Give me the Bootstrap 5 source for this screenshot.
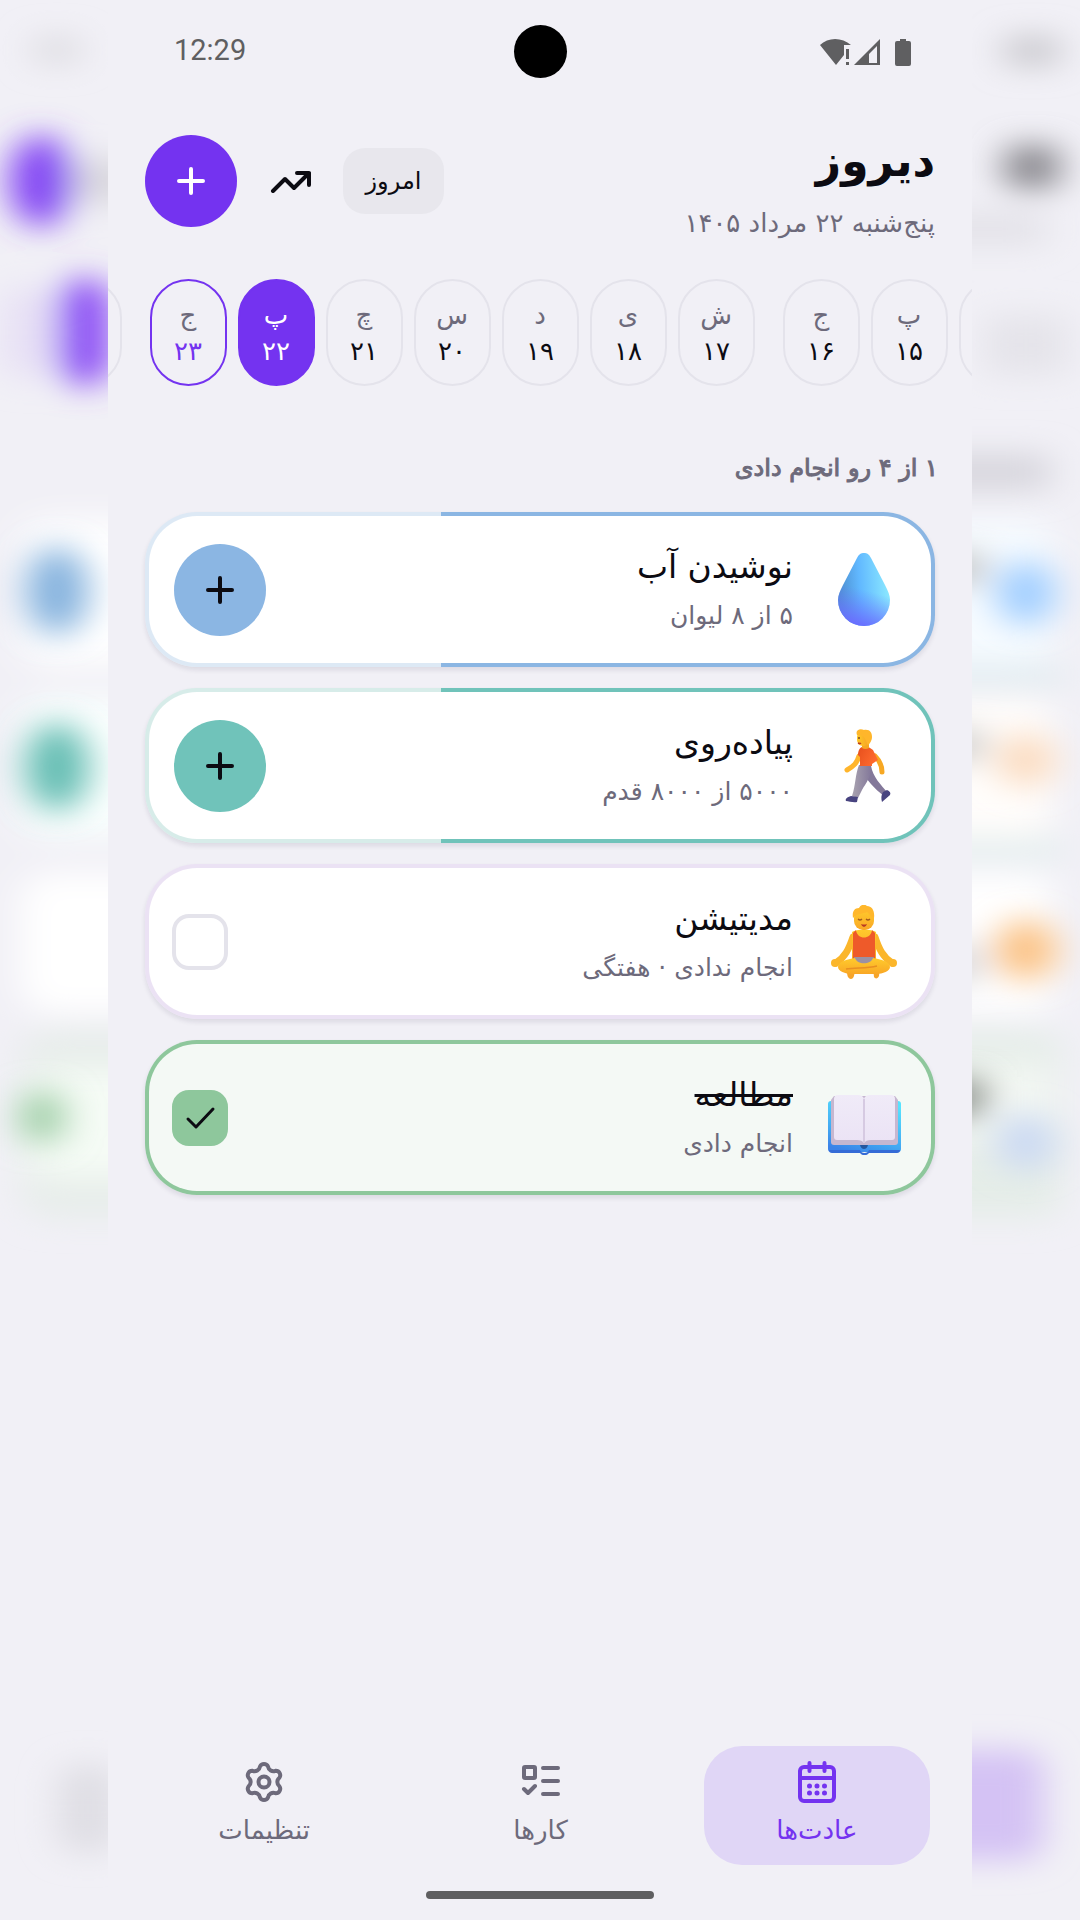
<!DOCTYPE html>
<html lang="fa" dir="rtl">
<head>
<meta charset="utf-8">
<meta name="viewport" content="width=device-width, initial-scale=1">
<title>عادت‌ها</title>
<link href="https://cdn.jsdelivr.net/npm/bootstrap@5.3.0/dist/css/bootstrap.min.css" rel="stylesheet">
<style>
:root{--ink:#0c0b12;--muted-ink:#6d6a7b;--accent:#7433f0;--page:#f1f0f6;--line:#e4e3eb}
body{background:var(--page);color:var(--ink);font-family:"DejaVu Sans",sans-serif}
.side-glow{flex:0 0 10%;overflow:hidden;position:relative}
.side-glow svg{position:absolute;inset:0;width:100%;height:100%}
.screen{flex:1 1 0;min-width:0}
.status{height:102px;padding:0 60px;color:#5f5f61;font-family:Roboto,sans-serif;font-size:29px}
.status>*{flex:1 1 0}
.clock{text-indent:6px}
.status .camera{flex:0 0 53px;height:53px;border-radius:50%;background:#000}
.top{padding:33px 37px 0}
.page-title{font-size:44px;line-height:52px;font-weight:700}
.sub-date{font-size:26px;line-height:36px;color:var(--muted-ink);margin-top:18px}
.round-btn{width:92px;height:92px;border-radius:50%;border:0;color:var(--ink)}
.round-btn.accent{background:var(--accent);color:#fff}
.tool-btn{border:0;background:none;width:42px;height:92px;color:var(--ink)}
.today-btn{height:66px;width:101px;border:0;border-radius:22px;background:#e8e7ed;color:var(--ink);font-size:24px}
.actions{gap:32px}
.days{gap:11px;margin-top:38px}
.day{flex:0 0 77px;height:107px;border:2px solid var(--line);border-radius:39px;background:none;color:var(--muted-ink);font-size:26px;line-height:36px}
.day b{color:var(--ink);font-weight:400}
.day.now{border-color:var(--accent)}
.day.now b{color:var(--accent)}
.day.chosen{background:var(--accent);border-color:var(--accent);color:#fff}
.day.chosen b{color:#fff}
.week-end{margin-left:17px}
.summary{font-size:24px;line-height:36px;font-weight:400;-webkit-text-stroke:1px currentColor;color:var(--muted-ink);padding:0 34px;margin:64px 0 26px}
.habits{gap:21px;padding:0 37px}
.habit{--fill:#fff;height:155px;border:4px solid transparent;border-radius:52px;padding:0 30px 0 25px;gap:34px;
 background:linear-gradient(var(--fill),var(--fill)) padding-box,linear-gradient(to left,var(--tone) var(--done),var(--tint) 0) border-box;
 box-shadow:0 3px 5px rgba(30,20,60,.1)}
.water{--tone:#8bb6e3;--tint:#dde9f5}
.walk{--tone:#70c3ba;--tint:#d7ece9}
.calm{--tone:#c9a9e6;--tint:#ebe2f4}
.read{--tone:#8ec79c;--tint:#dcefe1;--fill:#f4f9f5}
.calm,.read{padding-left:23px}
.habit .round-btn{background:var(--tone)}
.pic{flex:0 0 74px;height:74px}
.habit-name{font-size:33px;line-height:46px;font-weight:400}
.habit-note{font-size:25px;line-height:40px;color:var(--muted-ink);margin-top:6px}
.tick{appearance:none;width:56px;height:56px;margin:0;border:4px solid var(--line);border-radius:17px;background:#fff center/32px no-repeat}
.tick:checked{border-color:var(--tone);background-color:var(--tone);background-image:url("data:image/svg+xml,%3Csvg xmlns='http://www.w3.org/2000/svg' viewBox='0 0 32 32'%3E%3Cpath d='M4 17l8 8L29 7' fill='none' stroke='%230c0b12' stroke-width='3' stroke-linecap='round' stroke-linejoin='round'/%3E%3C/svg%3E")}
.tabs{padding:0 42px 0 43px;gap:50px}
.tab{flex:1 1 0;height:119px;border-radius:38px;color:var(--muted-ink);font-size:26px;line-height:36px;padding-top:12px;gap:6px}
.tab.active{background:#e0d6f6;color:var(--accent)}
.home-bar{width:228px;height:8px;border-radius:4px;background:#5f5f61;margin:26px auto 21px}
.ico{fill:none;stroke:currentColor;stroke-width:4;stroke-linecap:round;stroke-linejoin:round}
</style>
<script src="https://cdn.jsdelivr.net/npm/bootstrap@5.3.0/dist/js/bootstrap.bundle.min.js"></script>
</head>
<body>
<div class="d-flex min-vh-100 overflow-hidden">
 <div class="side-glow" aria-hidden="true">
  <svg viewBox="0 0 108 1920" preserveAspectRatio="none">
   <defs><filter id="gr" filterUnits="userSpaceOnUse" x="-140" y="0" width="400" height="1920"><feGaussianBlur stdDeviation="18 15"/></filter></defs>
   <g filter="url(#gr)">
    <rect x="-130" y="520" width="210" height="145" rx="20" fill="#f6fbff"/>
    <rect x="-130" y="697" width="210" height="140" rx="20" fill="#fffdfb"/>
    <rect x="-130" y="873" width="210" height="140" rx="20" fill="#fff"/>
    <rect x="-130" y="665" width="220" height="22" fill="#dfeaef"/>
    <rect x="-130" y="838" width="220" height="22" fill="#e3eeee"/>
    <rect x="-130" y="1030" width="220" height="188" rx="20" fill="#e5ede8"/>
    <rect x="-130" y="1062" width="210" height="80" rx="20" fill="#f3f7f3"/>
   </g>
   <g filter="url(#gr)">
    <rect x="32" y="38" width="56" height="26" fill="#c5c4c9"/>
    <rect x="32" y="146" width="56" height="42" rx="12" fill="#85848a"/>
    <rect x="-60" y="214" width="134" height="30" fill="#e2e1e7"/>
    <rect x="12" y="315" width="84" height="60" fill="#e5e4ea"/>
    <rect x="-60" y="455" width="138" height="34" fill="#d5d4db"/>
    <ellipse cx="54" cy="593" rx="30" ry="32" fill="#a0ceff"/>
    <ellipse cx="54" cy="760" rx="30" ry="26" fill="#fbdbc0"/>
    <ellipse cx="54" cy="950" rx="32" ry="30" fill="#fbc285"/>
    <ellipse cx="54" cy="1142" rx="30" ry="28" fill="#cbd9f3"/>
    <rect x="-60" y="555" width="72" height="26" fill="#b9b9b9"/>
    <rect x="-60" y="732" width="72" height="26" fill="#c4c4c4"/>
    <rect x="-60" y="945" width="70" height="36" fill="#d5d5d9"/>
    <rect x="-60" y="1080" width="72" height="34" fill="#7f857f"/>
    <rect x="-60" y="1750" width="132" height="110" rx="20" fill="#d4c2f4"/>
   </g>
  </svg>
 </div>

 <main class="screen d-flex flex-column min-vh-100">
  <div class="status d-flex align-items-center" dir="ltr">
   <span class="clock">12:29</span>
   <span class="camera"></span>
   <span class="text-end lh-1"><svg width="92" height="28" viewBox="0 0 92 28" fill="#5f5f61" role="img" aria-label="Wi-Fi, signal, battery">
    <path d="M0 7C8-1 22-1 31 7h-7v10l-8 10z"/><path d="M26 11h3v10h-3zM26 24h3v3h-3z"/>
    <path fill-rule="evenodd" d="M34 27L60 1v26zM49 25h8V8l-8 8z"/>
    <path d="M80 1h6v2h3q2 0 2 2v21q0 2-2 2H77q-2 0-2-2V5q0-2 2-2h3z"/></svg></span>
  </div>

  <header class="top d-flex justify-content-between align-items-start">
   <div>
    <h1 class="page-title m-0">دیروز</h1>
    <p class="sub-date mb-0">پنج‌شنبه ۲۲ مرداد ۱۴۰۵</p>
   </div>
   <div class="actions d-flex align-items-center">
    <button class="today-btn p-0" type="button">امروز</button>
    <button class="tool-btn p-0" type="button" aria-label="آمار"><svg class="ico" width="42" height="24" viewBox="0 0 42 24"><path d="M4 22L16 10l9 9L40 4M28 4h12v12"/></svg></button>
    <button class="round-btn accent p-0" type="button" aria-label="افزودن"><svg class="ico" width="28" height="28" viewBox="0 0 28 28"><path d="M14 2v24M2 14h24"/></svg></button>
   </div>
  </header>

  <div class="days d-flex justify-content-center overflow-hidden">
   <button class="day p-0" type="button" aria-label="۱۴"></button>
   <button class="day p-0" type="button">پ<b class="d-block">۱۵</b></button>
   <button class="day week-end p-0" type="button">ج<b class="d-block">۱۶</b></button>
   <button class="day p-0" type="button">ش<b class="d-block">۱۷</b></button>
   <button class="day p-0" type="button">ی<b class="d-block">۱۸</b></button>
   <button class="day p-0" type="button">د<b class="d-block">۱۹</b></button>
   <button class="day p-0" type="button">س<b class="d-block">۲۰</b></button>
   <button class="day p-0" type="button">چ<b class="d-block">۲۱</b></button>
   <button class="day chosen p-0" type="button">پ<b class="d-block">۲۲</b></button>
   <button class="day now week-end p-0" type="button">ج<b class="d-block">۲۳</b></button>
   <button class="day p-0" type="button" aria-label="۲۴"></button>
  </div>

  <h2 class="summary">۱ از ۴ رو انجام دادی</h2>

  <section class="habits d-flex flex-column">
   <article class="habit water d-flex align-items-center" style="--done:62.5%">
    <svg class="pic" viewBox="0 0 74 74" aria-hidden="true">
     <defs><linearGradient id="w1" x1="0" y1=".3" x2="1" y2=".2"><stop stop-color="#4d8fcf"/><stop offset=".4" stop-color="#61b8ff"/><stop offset="1" stop-color="#8eecff"/></linearGradient>
     <linearGradient id="w2" x1=".6" y1="0" x2=".4" y2="1"><stop offset=".5" stop-color="#6a7cff" stop-opacity="0"/><stop offset="1" stop-color="#6a6cff"/></linearGradient></defs>
     <path d="M37 0c3 0 5 1 7 5l14 27c3 6 5 10 5 15a26 26 0 0 1-52 0c0-5 2-9 5-15L30 5c2-4 4-5 7-5z" fill="url(#w1)"/>
     <path d="M37 0c3 0 5 1 7 5l14 27c3 6 5 10 5 15a26 26 0 0 1-52 0c0-5 2-9 5-15L30 5c2-4 4-5 7-5z" fill="url(#w2)"/>
    </svg>
    <div class="flex-grow-1"><h3 class="habit-name mb-0">نوشیدن آب</h3><p class="habit-note mb-0">۵ از ۸ لیوان</p></div>
    <button class="round-btn p-0" type="button" aria-label="افزودن لیوان"><svg class="ico" width="28" height="28" viewBox="0 0 28 28"><path d="M14 2v24M2 14h24"/></svg></button>
   </article>

   <article class="habit walk d-flex align-items-center" style="--done:62.5%">
    <svg class="pic" viewBox="0 0 74 74" aria-hidden="true">
     <defs><linearGradient id="k1" x1="0" x2="1"><stop stop-color="#ffc928"/><stop offset="1" stop-color="#f5a126"/></linearGradient>
     <linearGradient id="k2" x1="0" x2="1" y2=".5"><stop stop-color="#e6501d"/><stop offset="1" stop-color="#ff6a2e"/></linearGradient>
     <linearGradient id="k3" x1="0" x2="1"><stop stop-color="#a9a3b0"/><stop offset="1" stop-color="#83789a"/></linearGradient></defs>
     <path d="M48 27c5 5 7 10 7 16" fill="none" stroke="#f7a823" stroke-width="5" stroke-linecap="round"/>
     <path d="M32 27c-2 7-5 10-12 14" fill="none" stroke="#ffb52b" stroke-width="5" stroke-linecap="round"/>
     <path d="M44 37c2 11 10 19 17 27l-4 3C48 60 39 51 34 40z" fill="#83789a"/>
     <path d="M32 36h12c1 11-5 18-9 25l-4 8-6-2c4-12 3-21 7-31z" fill="url(#k3)"/>
     <path d="M60 61c3 1 4 3 3 5l-8 7c-1-3-1-7 1-10zM24 67l7 1-1 5c-4 1-8-1-11-1-1-2 1-4 5-5z" fill="#484480"/>
     <path d="M35 18c4-1 8 0 11 3l5 10-6 4v2H33V28l-2-2c0-3 1-7 4-8z" fill="url(#k2)"/>
     <path d="M35 14h7v5q-4 2-7 0z" fill="#f6a623"/>
     <rect x="30" y="2" width="13" height="15" rx="6" fill="url(#k1)"/>
     <path d="M30 6c-2-5 3-7 7-5 6-1 8 3 8 7 0 3-2 7-4 8-2-2-1-4-3-6-1-3-4-4-8-4z" fill="#ffb62b"/>
     <circle cx="32" cy="9" r="1" fill="#7b4b22"/><path d="M31 14q2 1 3 0" stroke="#bb3d25" stroke-width="1.500" fill="none"/>
    </svg>
    <div class="flex-grow-1"><h3 class="habit-name mb-0">پیاده‌روی</h3><p class="habit-note mb-0">۵۰۰۰ از ۸۰۰۰ قدم</p></div>
    <button class="round-btn p-0" type="button" aria-label="افزودن قدم"><svg class="ico" width="28" height="28" viewBox="0 0 28 28"><path d="M14 2v24M2 14h24"/></svg></button>
   </article>

   <article class="habit calm d-flex align-items-center" style="--done:0%">
    <svg class="pic" viewBox="0 0 74 74" aria-hidden="true">
     <defs><linearGradient id="m1" x2="0" y2="1"><stop stop-color="#ffcb2c"/><stop offset="1" stop-color="#f9a726"/></linearGradient></defs>
     <path d="M26 32c-4 12-8 20-17 26M48 32c4 12 8 20 17 26" fill="none" stroke="#fbb62b" stroke-width="7" stroke-linecap="round"/>
     <circle cx="8" cy="58" r="4" fill="#fbb62b"/><circle cx="66" cy="58" r="4" fill="#fbb62b"/>
     <path d="M21 66l7 1c-1 3-1 7-4 7s-4-4-4-7zM46 63h7l-1 8c-1 3-4 3-5 1z" fill="#f6a42a"/>
     <path d="M25 27c4-3 20-3 24 0v27H25z" fill="url(#m1)"/>
     <path d="M26 28l3-3c1 10 15 10 16 0l3 3v26H26z" fill="#ee5a2a"/>
     <path d="M27 52h20l-2 9H29z" fill="#9b91a3"/>
     <path d="M28 53c-8 1-17 4-17 9 0 4 7 7 14 7h24c7 0 14-3 14-7 0-5-9-8-17-9-2 7-16 7-18 0z" fill="url(#m1)"/>
     <path d="M19 64c9-2 20 0 31-3" fill="none" stroke="#e88f22" stroke-width="1.500"/>
     <rect x="27" y="4" width="20" height="21" rx="9" fill="url(#m1)"/>
     <path d="M26 13c-1-6 1-10 6-10 2-4 6-4 8-2 5 0 8 5 7 12-4-1-5-5-7-6-4 2-10 1-14 6z" fill="#ffb72b"/>
     <path d="M31 14q2 2 4 0M39 14q2 2 4 0" stroke="#a35b1b" stroke-width="1.300" fill="none"/><path d="M34 19q3 1 6 0-1 3-3 3t-3-3z" fill="#b93a24"/>
    </svg>
    <label class="flex-grow-1" for="tick-calm"><span class="habit-name d-block">مدیتیشن</span><span class="habit-note d-block">انجام ندادی · هفتگی</span></label>
    <input class="tick" type="checkbox" id="tick-calm">
   </article>

   <article class="habit read d-flex align-items-center" style="--done:100%">
    <svg class="pic" viewBox="0 0 74 74" aria-hidden="true">
     <defs><linearGradient id="b1" x1=".3" y1="1" x2=".7" y2="0"><stop stop-color="#3b83e8"/><stop offset=".3" stop-color="#42a8f2"/><stop offset="1" stop-color="#57e3ff"/></linearGradient>
     <linearGradient id="b2" x2="0" y2="1"><stop stop-color="#f0ebf8"/><stop offset="1" stop-color="#ebe3f5"/></linearGradient></defs>
     <rect x="1" y="20" width="73" height="51" rx="3" fill="url(#b1)"/>
     <path d="M2 69h31c1 4 8 4 9 0h31q0 3-3 3H42c-2 3-7 3-9 0H5q-3 0-3-3z" fill="#356bd6"/>
     <path d="M4 19l3-4h61l3 4v42q0 3-3 3H7q-3 0-3-3z" fill="#c6b7d0"/>
     <path d="M7 18q0-4 4-4h20q5 0 6 4 1-4 6-4h21q4 0 4 4v38q0 3-3 3H44q-5 0-7 3-2-3-7-3H10q-3 0-3-3z" fill="url(#b2)"/>
     <path d="M37 18v43" stroke="#d6cae2" stroke-width="2"/><path d="M33 64h8q-1 4-4 4t-4-4z" fill="#25579f"/>
    </svg>
    <label class="flex-grow-1" for="tick-read"><span class="habit-name d-block text-decoration-line-through">مطالعه</span><span class="habit-note d-block">انجام دادی</span></label>
    <input class="tick" type="checkbox" id="tick-read" checked>
   </article>
  </section>

  <nav class="tabs d-flex mt-auto">
   <a class="tab active d-flex flex-column align-items-center text-decoration-none" href="#habits">
    <svg class="ico" width="44" height="48" viewBox="0 0 44 48"><rect x="5" y="9" width="34" height="34" rx="4"/><path d="M5 20h34M14.500 5v8M29.500 5v8"/><path stroke-width="5" d="M14.500 28h0M22 28h0M29.500 28h0M14.500 35h0M22 35h0M29.500 35h0"/></svg>
    <span>عادت‌ها</span></a>
   <a class="tab d-flex flex-column align-items-center text-decoration-none" href="#tasks">
    <svg class="ico" width="44" height="48" viewBox="0 0 44 48"><rect x="5" y="9" width="11" height="11" rx="1"/><path d="M5 31l4 4 7-7M24 10h15M24 23h15M24 36h15"/></svg>
    <span>کارها</span></a>
   <a class="tab d-flex flex-column align-items-center text-decoration-none" href="#settings">
    <svg class="ico" width="44" height="48" viewBox="-22 -24 44 48"><path d="M-4-15.500A4.400 4.400 0 0 1 4-15.500A5.500 5.500 0 0 0 11.400-11.200A4.400 4.400 0 0 1 15.400-4.300A5.500 5.500 0 0 0 15.400 4.300A4.400 4.400 0 0 1 11.400 11.200A5.500 5.500 0 0 0 4 15.500A4.400 4.400 0 0 1-4 15.500A5.500 5.500 0 0 0-11.400 11.200A4.400 4.400 0 0 1-15.400 4.300A5.500 5.500 0 0 0-15.400-4.300A4.400 4.400 0 0 1-11.400-11.200A5.500 5.500 0 0 0-4-15.500z"/><circle r="5.500"/></svg>
    <span>تنظیمات</span></a>
  </nav>
  <div class="home-bar"></div>
 </main>

 <div class="side-glow" aria-hidden="true">
  <svg viewBox="0 0 108 1920" preserveAspectRatio="none">
   <g filter="url(#gr)">
    <rect x="20" y="520" width="240" height="145" rx="30" fill="#fff"/>
    <rect x="20" y="697" width="240" height="140" rx="30" fill="#fafffe"/>
    <rect x="20" y="873" width="240" height="140" rx="30" fill="#fff"/>
    <rect x="20" y="1030" width="240" height="188" rx="30" fill="#e7edea"/>
    <rect x="26" y="1068" width="240" height="110" rx="30" fill="#f5fbf5"/>
   </g>
   <g filter="url(#gr)">
    <rect x="34" y="38" width="46" height="24" fill="#dbdadf"/>
    <rect x="2" y="285" width="50" height="95" rx="25" fill="#e7e0f5"/>
    <rect x="66" y="160" width="80" height="42" fill="#d9d8dd"/>
    <ellipse cx="41" cy="181" rx="32" ry="46" fill="#8344f4"/>
    <rect x="58" y="278" width="54" height="108" rx="26" fill="#8c50f5"/>
    <ellipse cx="57" cy="591" rx="32" ry="44" fill="#86b3de"/>
    <ellipse cx="57" cy="767" rx="32" ry="44" fill="#65bdb3"/>
    <rect x="20" y="1093" width="44" height="48" rx="10" fill="#a0cfa8"/>
    <rect x="58" y="1765" width="60" height="88" rx="20" fill="#dfdee4"/>
   </g>
  </svg>
 </div>
</div>
</body>
</html>
